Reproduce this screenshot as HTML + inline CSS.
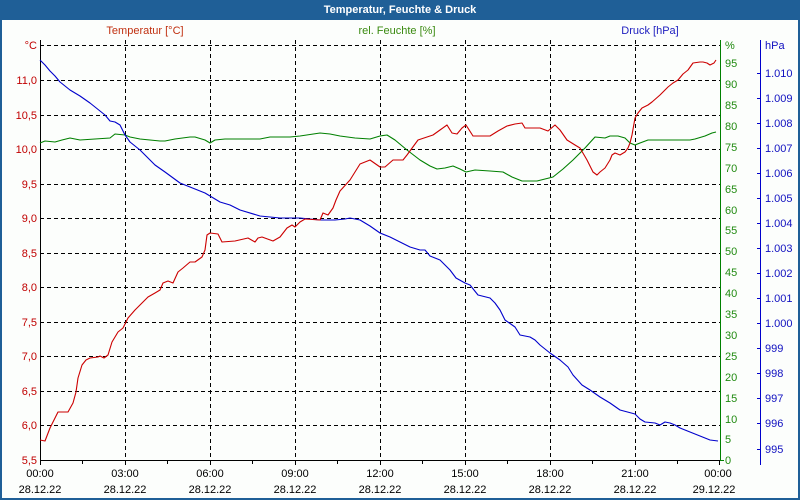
<!DOCTYPE html>
<html><head><meta charset="utf-8"><style>
html,body{margin:0;padding:0;width:800px;height:500px;overflow:hidden;background:#fff}
svg{display:block;font-family:"Liberation Sans",sans-serif;font-size:11px}
</style></head><body>
<svg width="800" height="500" viewBox="0 0 800 500">
<rect x="0" y="0" width="800" height="500" fill="#1f5f97"/>
<rect x="2" y="20" width="796" height="478" fill="#fcfefc"/>
<text x="400" y="13" fill="#fff" font-weight="bold" text-anchor="middle" font-size="11">Temperatur, Feuchte &amp; Druck</text>
<text x="145" y="34" fill="#c03010" text-anchor="middle">Temperatur [°C]</text>
<text x="397" y="34" fill="#3a8a10" text-anchor="middle">rel. Feuchte [%]</text>
<text x="650" y="34" fill="#2020c0" text-anchor="middle">Druck [hPa]</text>
<g stroke="#000" stroke-width="1" stroke-dasharray="4,3" fill="none">
<path d="M40 45.5H720M40 80.5H720M40 115.5H720M40 149.5H720M40 184.5H720M40 218.5H720M40 253.5H720M40 287.5H720M40 322.5H720M40 356.5H720M40 391.5H720M40 425.5H720"/>
<path d="M125.5 40V460M210.5 40V460M295.5 40V460M380.5 40V460M465.5 40V460M550.5 40V460M635.5 40V460"/>
</g>
<path d="M40.5 40V460.5H720" stroke="#000" fill="none"/>
<path d="M720.5 40V460.5M720 460.5h4" stroke="#008000" fill="none"/>
<path d="M760.5 40V465" stroke="#0000cc" fill="none"/>
<g stroke="#000"><path d="M40.5 460v5M82.5 460v4M125.5 460v5M167.5 460v4M210.5 460v5M252.5 460v4M295.5 460v5M337.5 460v4M380.5 460v5M422.5 460v4M465.5 460v5M507.5 460v4M550.5 460v5M592.5 460v4M635.5 460v5M677.5 460v4M719.5 460v5"/></g>
<g stroke="#0000cc"><path d="M757 73.5h3M757 98.5h3M757 123.5h3M757 148.5h3M757 173.5h3M757 198.5h3M757 223.5h3M757 248.5h3M757 273.5h3M757 298.5h3M757 323.5h3M757 348.5h3M757 373.5h3M757 398.5h3M757 423.5h3M757 449.5h3"/></g>
<g fill="#c00000" text-anchor="end">
<text x="37" y="49">°C</text><text x="37" y="84">11,0</text><text x="37" y="119">10,5</text><text x="37" y="153">10,0</text><text x="37" y="188">9,5</text><text x="37" y="222">9,0</text><text x="37" y="257">8,5</text><text x="37" y="291">8,0</text><text x="37" y="326">7,5</text><text x="37" y="360">7,0</text><text x="37" y="395">6,5</text><text x="37" y="429">6,0</text><text x="37" y="464">5,5</text>
</g>
<g fill="#208a10">
<text x="725" y="49">%</text><text x="725" y="67">95</text><text x="725" y="88">90</text><text x="725" y="109">85</text><text x="725" y="130">80</text><text x="725" y="151">75</text><text x="725" y="172">70</text><text x="725" y="193">65</text><text x="725" y="214">60</text><text x="725" y="234">55</text><text x="725" y="255">50</text><text x="725" y="276">45</text><text x="725" y="297">40</text><text x="725" y="318">35</text><text x="725" y="339">30</text><text x="725" y="360">25</text><text x="725" y="381">20</text><text x="725" y="402">15</text><text x="725" y="423">10</text><text x="725" y="443">5</text><text x="725" y="464">0</text>
</g>
<g fill="#1010c0">
<text x="765" y="49">hPa</text><text x="765" y="77">1.010</text><text x="765" y="102">1.009</text><text x="765" y="127">1.008</text><text x="765" y="152">1.007</text><text x="765" y="177">1.006</text><text x="765" y="202">1.005</text><text x="765" y="227">1.004</text><text x="765" y="252">1.003</text><text x="765" y="277">1.002</text><text x="765" y="302">1.001</text><text x="765" y="327">1.000</text><text x="765" y="352">999</text><text x="765" y="377">998</text><text x="765" y="402">997</text><text x="765" y="427">996</text><text x="765" y="453">995</text>
</g>
<g fill="#000" text-anchor="middle">
<text x="40" y="477">00:00</text><text x="125" y="477">03:00</text><text x="210" y="477">06:00</text><text x="295" y="477">09:00</text><text x="380" y="477">12:00</text><text x="465" y="477">15:00</text><text x="550" y="477">18:00</text><text x="635" y="477">21:00</text><text x="718" y="477">00:00</text>
<text x="40" y="493">28.12.22</text><text x="125" y="493">28.12.22</text><text x="210" y="493">28.12.22</text><text x="295" y="493">28.12.22</text><text x="380" y="493">28.12.22</text><text x="465" y="493">28.12.22</text><text x="550" y="493">28.12.22</text><text x="635" y="493">28.12.22</text><text x="714" y="493">29.12.22</text>
</g>
<g fill="none" stroke-width="1.1" stroke-linejoin="round">
<polyline stroke="#008000" points="40,143 45,141 55,142 62,140 70,138 80,140 95,139 110,138 115,134 125,135 130,137 140,139 150,140 160,141 165,141 175,139 190,137 195,137 205,140 210,143 215,140 225,139 240,139 260,139 270,137 290,137 300,136 320,133 330,134 340,136 355,138 370,139 380,136 387,135 395,140 407,150 420,160 430,166 437,169 445,168 453,166 460,169 466,172 475,170 490,171 503,172 512,177 522,181 537,181 553,177 563,169 573,160 585,148 595,137 605,138 610,136 618,136 625,138 630,143 635,145 640,143 648,140 690,140 695,139 705,136 712,133 716,132"/>
<polyline stroke="#0000cc" points="40,60 45,65 50,71 55,76 60,82 70,90 80,96 90,103 95,107 100,111 105,115 110,121 115,122 120,125 125,135 130,142 140,150 150,160 155,165 165,172 180,183 190,187 200,191 205,193 210,196 220,202 230,205 240,210 260,216 280,218 300,218 320,220 335,220 345,219 350,218 360,220 370,226 380,233 390,237 400,242 410,247 420,250 425,250 430,256 440,260 450,270 456,278 465,283 470,285 478,295 490,298 495,303 500,310 505,320 515,327 520,335 530,337 535,340 540,345 550,353 560,360 568,367 573,375 582,385 590,390 600,397 610,403 620,410 635,414 640,419 645,422 655,423 660,425 665,422 670,423 675,425 680,428 690,432 700,436 710,440 718,441"/>
<polyline stroke="#cc0000" points="40,440 45,441 50,428 53,422 58,412 68,412 73,403 76,392 78,378 82,365 86,360 90,358 98,357 100,356 104,358 108,355 112,342 118,332 123,328 128,318 135,310 140,305 148,297 155,293 160,290 163,283 168,281 173,283 178,272 183,268 190,262 195,262 202,257 205,250 207,235 210,233 218,234 222,242 235,241 248,238 255,242 258,238 262,237 273,241 280,237 287,228 292,225 295,227 300,222 305,219 320,220 323,213 328,215 333,208 336,200 340,191 350,180 360,164 370,160 380,167 385,167 393,160 403,160 407,155 418,140 433,135 440,130 447,125 452,133 457,134 462,128 466,125 473,136 490,136 498,131 507,126 515,124 522,123 525,128 540,128 548,131 555,125 560,130 567,140 575,145 580,148 587,160 593,172 597,175 600,172 605,168 610,160 612,155 615,153 620,155 625,152 628,148 630,143 632,135 635,118 638,113 642,108 648,105 652,102 660,95 668,87 673,83 678,80 683,74 688,70 693,63 700,62 703,62 707,63 710,65 714,63 716,60"/>
</g>
</svg>
</body></html>
